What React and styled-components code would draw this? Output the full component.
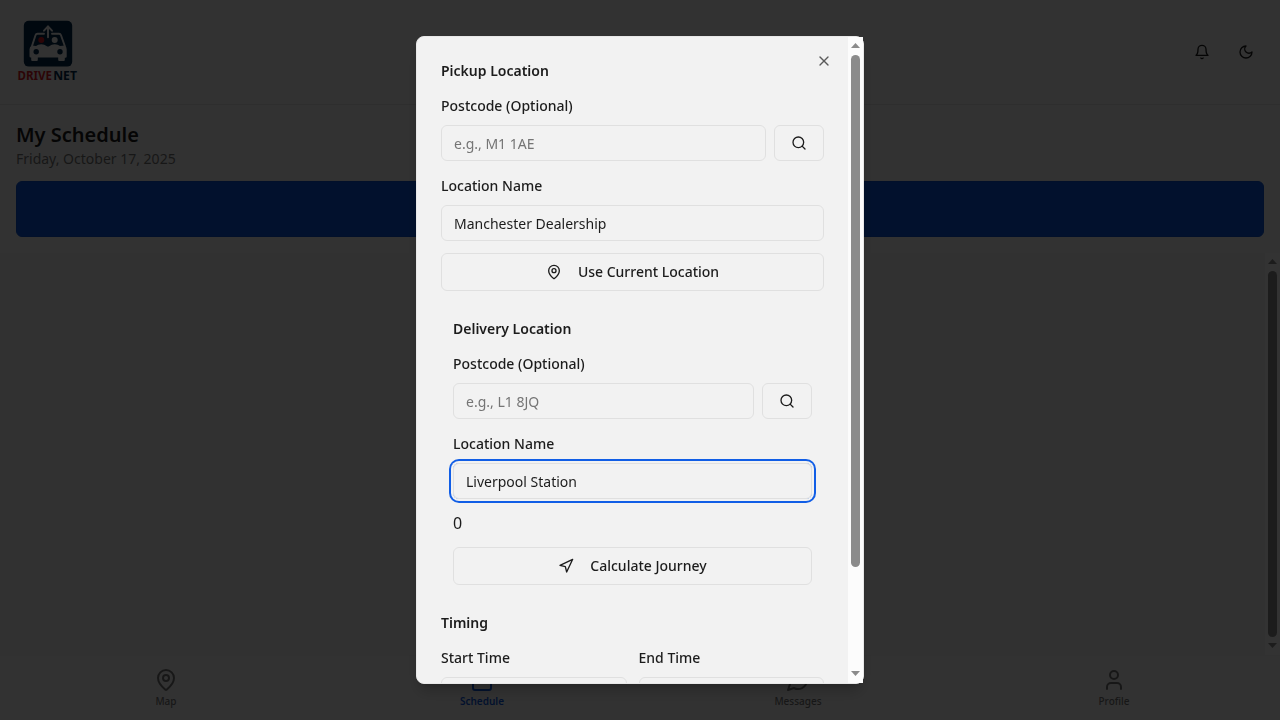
import React from "react";
import styled, { createGlobalStyle, css } from "styled-components";
import { MapPin, Calendar, User, Search, Navigation, X } from "lucide-react";

const GlobalStyle = createGlobalStyle`
  *, *::before, *::after { box-sizing: border-box; }
  body {
    margin: 0;
    background: #fafafa;
    color: #1c1c1c;
    font-family: "Noto Sans", sans-serif;
    font-size: 16px;
    line-height: 24px;
    overflow: hidden;
  }
  h1, h2, p { margin: 0; }
  button, input { font: inherit; color: inherit; }
`;

const Page = styled.div`
  display: flex;
  flex-direction: column;
  height: 100vh;
`;

const Header = styled.header`
  display: flex;
  align-items: center;
  justify-content: space-between;
  height: 105px;
  padding: 0 16px;
  border-bottom: 1px solid #e6e6e6;
`;

const LogoArt = styled.svg`
  display: block;
  width: 64px;
  height: 64px;
`;

const HeaderActions = styled.div`
  display: flex;
  gap: 8px;
`;

const IconButton = styled.button`
  display: flex;
  align-items: center;
  justify-content: center;
  width: 36px;
  height: 36px;
  padding: 0;
  border: 0;
  background: transparent;
`;

const ScheduleHead = styled.section`
  padding: 16px;
  height: 148px;
`;

const PageTitle = styled.h1`
  font-size: 20px;
  line-height: 28px;
  font-weight: 600;
`;

const PageDate = styled.p`
  font-size: 14px;
  line-height: 20px;
  color: #767676;
`;

const PrimaryBar = styled.button`
  display: block;
  width: 100%;
  height: 56px;
  margin-top: 12px;
  border: 1px solid #0a50d0;
  border-radius: 6px;
  background: #0c58de;
`;

const Main = styled.main`
  display: flex;
  justify-content: flex-end;
  flex: 1;
  min-height: 0;
  background: #f6f6f6;
`;

const BottomNav = styled.nav`
  display: flex;
  height: 65px;
  padding: 0 8px;
  border-top: 1px solid #f2f2f2;
`;

const NavItem = styled.a`
  flex: 1;
  display: flex;
  flex-direction: column;
  align-items: center;
  padding-top: 12px;
  gap: 2px;
  font-size: 10px;
  line-height: 15px;
  font-weight: ${(p) => (p.$active ? 600 : 500)};
  color: ${(p) => (p.$active ? "#0c58de" : "#767676")};
`;

const Track = styled.div`
  display: flex;
  flex-direction: column;
  align-items: center;
  width: 15px;
  flex: none;
  background: #fcfcfc;
`;

const Arrow = styled.svg`
  display: block;
  width: 15px;
  height: 17px;
  flex: none;
`;

const Thumb = styled.div`
  width: 9px;
  height: ${(p) => p.$length}px;
  margin-top: ${(p) => p.$offset}px;
  margin-bottom: auto;
  border-radius: 5px;
  background: #8b8b8b;
`;

const Backdrop = styled.div`
  position: fixed;
  inset: 0;
  display: flex;
  align-items: center;
  justify-content: center;
  background: rgba(0, 0, 0, 0.8);
`;

const Dialog = styled.div`
  position: relative;
  display: flex;
  width: 448px;
  height: 648px;
  border: 1px solid #e8e8e8;
  border-radius: 8px;
  background: #f2f2f2;
  box-shadow: 0 10px 15px -3px rgba(0, 0, 0, 0.2), 0 4px 6px -4px rgba(0, 0, 0, 0.2);
`;

const DialogBody = styled.div`
  flex: 1;
  min-width: 0;
  display: flex;
  flex-direction: column;
  gap: 16px;
  padding: 24px;
  overflow: hidden;
  border-radius: 7px 0 0 7px;
`;

const CloseButton = styled.button`
  position: absolute;
  top: 16px;
  right: 31px;
  display: flex;
  width: 16px;
  height: 16px;
  padding: 0;
  border: 0;
  background: transparent;
  opacity: 0.7;
`;

const Section = styled.section`
  display: flex;
  flex-direction: column;
  flex: none;
  gap: 12px;
  padding: ${(p) => (p.$inset ? "12px" : "0")};
`;

const SectionTitle = styled.h2`
  font-size: 14px;
  line-height: 20px;
  font-weight: 600;
`;

const Field = styled.div`
  display: flex;
  flex-direction: column;
  min-width: 0;
  padding-top: 3px;
  gap: 9px;
`;

const Label = styled.label`
  font-size: 14px;
  line-height: 20px;
  font-weight: 500;
`;

const Row = styled.div`
  display: flex;
  gap: 8px;
`;

const control = css`
  border: 1px solid #e0e0e0;
  border-radius: 6px;
  background: transparent;
  font-size: 14px;
  line-height: 20px;
`;

const Input = styled.input`
  ${control}
  flex: 1 1 auto;
  width: 100%;
  min-width: 0;
  height: 36px;
  min-height: 36px;
  padding: 0 12px;
  outline: none;
  caret-color: transparent;
  &::placeholder { color: #757575; opacity: 1; }
  ${(p) => p.$focused && css`
    box-shadow: 0 0 0 2px #f2f2f2, 0 0 0 4px #115ee6;
  `}
`;

const SearchButton = styled.button`
  ${control}
  display: flex;
  align-items: center;
  justify-content: center;
  flex: none;
  width: 50px;
  height: 36px;
  padding: 0;
`;

const OutlineButton = styled.button`
  ${control}
  display: flex;
  align-items: center;
  justify-content: center;
  gap: 16px;
  width: 100%;
  height: 38px;
  font-weight: 500;
`;

const Columns = styled.div`
  display: grid;
  grid-template-columns: 1fr 1fr;
  gap: 12px;
`;

const StrokeIcon = styled.svg.attrs({ viewBox: "0 0 24 24" })`
  width: ${(p) => p.$size}px;
  height: ${(p) => p.$size}px;
  fill: none;
  stroke: currentColor;
  stroke-width: 2;
  stroke-linecap: round;
  stroke-linejoin: round;
`;

function Bell({ size }) {
  return (
    <StrokeIcon $size={size}>
      <path d="M6 8a6 6 0 0 1 12 0c0 7 3 9 3 9H3s3-2 3-9" />
      <path d="M10.300 21a1.940 1.940 0 0 0 3.400 0" />
    </StrokeIcon>
  );
}

function Moon({ size }) {
  return (
    <StrokeIcon $size={size}>
      <path d="M12 3a6 6 0 0 0 9 9 9 9 0 1 1-9-9Z" />
    </StrokeIcon>
  );
}

function MessageCircle({ size }) {
  return (
    <StrokeIcon $size={size}>
      <path d="M7.900 20A9 9 0 1 0 4 16.100L2 22Z" />
    </StrokeIcon>
  );
}

function Logo() {
  return (
    <LogoArt viewBox="0 0 64 64">
      <rect x="7.800" y="0.800" width="48.400" height="45.800" rx="5" fill="#00284b" />
      <path d="M28 13.800h-6.500q-1.500 0-2 1.500L16 26M36 13.800h7q1.500 0 2 1.500L48.800 26" fill="none" stroke="#fafafa" strokeWidth="1.900" strokeLinecap="round" />
      <path d="M16 25.500l4 .5q2-1.700 5.300-1.700t5.200 1.700q1.500 1 3 0 2-1.700 5.200-1.700T44 26l5-.5q1.700 1.500 1.700 4v7q0 1.200-1.200 1.200h-.7V40q0 1-1 1h-4.600q-1 0-1-1v-2.500H21.800V40q0 1-1 1h-4.600q-1 0-1-1v-2.500h-.5q-1.200 0-1.200-1.200v-7q0-2.500 2.500-3.800z" fill="#fafafa" />
      <path d="M32 17.300V6.500m-4 4.200L32 6.500l4 4.200" fill="none" stroke="#fafafa" strokeWidth="1.900" strokeLinecap="round" />
      <circle cx="25.300" cy="20" r="3" fill="#dc1c26" />
      <circle cx="38.700" cy="20" r="3" fill="#fafafa" />
      <circle cx="20.200" cy="31.800" r="2.700" fill="#00284b" />
      <circle cx="44" cy="31.800" r="2.700" fill="#00284b" />
      <g fontFamily="Noto Sans, sans-serif" fontSize="13" fontWeight="700">
        <text x="1.500" y="59.700" fill="#dc1c26" textLength="34.500" lengthAdjust="spacingAndGlyphs">DRIVE</text>
        <text x="37.200" y="59.700" fill="#00284b" textLength="23.800" lengthAdjust="spacingAndGlyphs">NET</text>
      </g>
    </LogoArt>
  );
}

function ScrollBar({ offset, length }) {
  return (
    <Track>
      <Arrow viewBox="0 0 15 17"><path d="M7.500 6L12 11H3z" fill="#8b8b8b" /></Arrow>
      <Thumb $offset={offset} $length={length} />
      <Arrow viewBox="0 0 15 17"><path d="M3 5h9l-4.500 5z" fill="#8b8b8b" /></Arrow>
    </Track>
  );
}

const tabs = [
  { label: "Map", icon: MapPin },
  { label: "Schedule", icon: Calendar, active: true },
  { label: "Messages", icon: MessageCircle },
  { label: "Profile", icon: User },
];

function PostcodeField({ placeholder }) {
  return (
    <Field>
      <Label>Postcode (Optional)</Label>
      <Row>
        <Input placeholder={placeholder} />
        <SearchButton aria-label="Search"><Search size={16} /></SearchButton>
      </Row>
    </Field>
  );
}

export default function App() {
  return (
    <>
      <GlobalStyle />
      <Page>
        <Header>
          <Logo />
          <HeaderActions>
            <IconButton aria-label="Notifications"><Bell size={16} /></IconButton>
            <IconButton aria-label="Theme"><Moon size={16} /></IconButton>
          </HeaderActions>
        </Header>
        <ScheduleHead>
          <PageTitle>My Schedule</PageTitle>
          <PageDate>Friday, October 17, 2025</PageDate>
          <PrimaryBar aria-label="Add job" />
        </ScheduleHead>
        <Main><ScrollBar offset={1} length={366} /></Main>
        <BottomNav>
          {tabs.map(({ label, icon: Icon, active }) => (
            <NavItem key={label} $active={active}>
              <Icon size={24} />
              {label}
            </NavItem>
          ))}
        </BottomNav>
      </Page>
      <Backdrop>
        <Dialog role="dialog">
          <DialogBody>
            <Section>
              <SectionTitle>Pickup Location</SectionTitle>
              <PostcodeField placeholder="e.g., M1 1AE" />
              <Field>
                <Label>Location Name</Label>
                <Input defaultValue="Manchester Dealership" />
              </Field>
              <OutlineButton><MapPin size={16} />Use Current Location</OutlineButton>
            </Section>
            <Section $inset>
              <SectionTitle>Delivery Location</SectionTitle>
              <PostcodeField placeholder="e.g., L1 8JQ" />
              <Field>
                <Label>Location Name</Label>
                <Input defaultValue="Liverpool Station" $focused />
              </Field>
              <p>0</p>
              <OutlineButton><Navigation size={16} />Calculate Journey</OutlineButton>
            </Section>
            <Section>
              <SectionTitle>Timing</SectionTitle>
              <Columns>
                <Field>
                  <Label>Start Time</Label>
                  <Input />
                </Field>
                <Field>
                  <Label>End Time</Label>
                  <Input />
                </Field>
              </Columns>
            </Section>
          </DialogBody>
          <ScrollBar offset={1} length={512} />
          <CloseButton aria-label="Close"><X size={16} /></CloseButton>
        </Dialog>
      </Backdrop>
    </>
  );
}
